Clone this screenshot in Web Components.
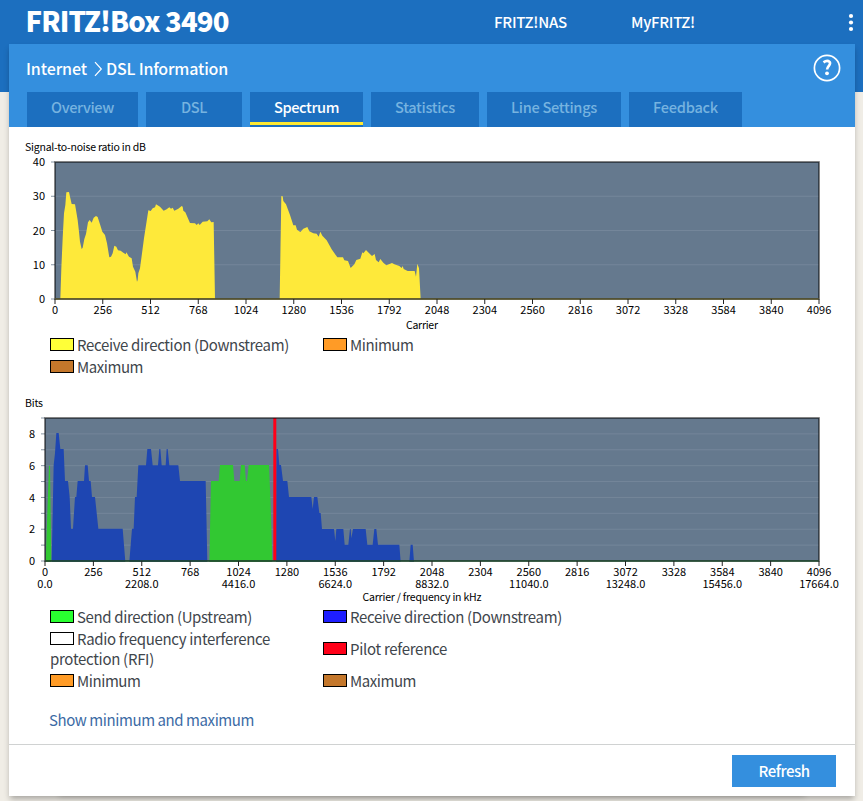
<!DOCTYPE html>
<html lang="en">
<head>
<meta charset="utf-8">
<title>FRITZ!Box 3490</title>
<style>
html,body{margin:0;height:100%;overflow:hidden}
body{font-family:"Noto Sans CJK SC","Noto Sans",sans-serif;color:#3f464c;background:linear-gradient(#1c6fbf 92px,#f0ede6 92px)}
</style>
</head>
<body>
<fritz-page></fritz-page>
<script>
const define = (name, html, init) => customElements.define(name, class extends HTMLElement {
  constructor() {
    super();
    this.attachShadow({ mode: 'open' }).innerHTML = html;
  }
  connectedCallback() { if (init) init.call(this, this.shadowRoot); }
});

// One line of text, tracked so that it fills the width given in its w attribute.
define('fit-text', `<style>:host{display:inline-block;white-space:nowrap}span{display:inline-block}</style><span><slot></slot></span>`, function (root) {
  const w = +this.getAttribute('w'), span = root.querySelector('span');
  const n = this.textContent.length;
  const natural = span.getBoundingClientRect().width;
  if (w && natural) { span.style.letterSpacing = (w - natural) / n + 'px'; }
});

define('nav-tab', `<style>
:host{display:block;box-sizing:border-box;height:35px;background:#1c6fbf;color:#76b3e0;font-size:14.6px;font-weight:500;line-height:30px;text-align:center}
:host([active]){color:#fff;height:33px;border-bottom:3px solid #fee931;box-shadow:0 2px #1c6fbf}
</style><slot></slot>`);

define('legend-item', `<style>
:host{display:block;font-size:15px;line-height:20px;padding:1px 0}
i{display:inline-block;box-sizing:border-box;width:24px;height:13px;border:1px solid #000;background:var(--swatch);margin-right:3px;vertical-align:0}
</style><i></i><slot></slot>`);

define('legend-grid', `<style>:host{display:grid;grid-template-columns:273px 300px;align-items:center;padding-left:41px}</style><slot></slot>`);

const line = (x1, y1, x2, y2, c, w = 1) => `<line x1="${x1}" y1="${y1}" x2="${x2}" y2="${y2}" stroke="${c}" stroke-width="${w}"/>`;
const text = (x, y, s, w, a = 'middle', c = '') => `<text class="${c}" x="${x}" y="${y}" text-anchor="${a}"${w ? ` textLength="${w}"` : ''}>${s}</text>`;
const area = (ox, oy, c, pts) => `<polygon transform="translate(${ox} ${oy}) scale(.33333)" fill="${c}" points="${pts}"/>`;

function plot(o) {
  let s = `<rect x="${o.x}" y="${o.y}" width="${819 - o.x}" height="${o.b - o.y}" fill="#65798e"/>`;
  const rows = o.rows;
  for (let i = 0; i <= rows; i++) {
    const y = o.b - (o.b - o.y) * i / rows;
    if (i && i < rows) s += line(o.x, y, 819, y, '#74869a');
    s += line(o.x - 4, y, o.x, y, '#8795a3');
    if (o.label(i) !== null) s += text(o.x - 10, y + 4.2, o.label(i), 0, 'end');
  }
  s += o.areas;
  s += `<rect x="${o.x}" y="${o.y}" width="${819 - o.x}" height="${o.b - o.y}" fill="none" stroke="#000" stroke-opacity=".6" stroke-width="1.6"/>`;
  s += line(o.x, o.b, 819, o.b, o.base, 1.6);
  for (let i = 0; i <= 16; i++) {
    const x = o.x + (819 - o.x) * i / 16;
    s += line(x, o.b, x, o.b + 5, '#222');
    s += text(x, o.b + 15, i * 256, [6, 18.5, 18.5, 18.5][i] || 24.5);
    if (o.freq && i % 2 === 0) s += text(x, o.b + 27, (i * 1104).toFixed(1));
  }
  return s;
}
const svgStyle = `<style>:host{display:block}svg{display:block}text{font-size:11px;fill:#000}.t{font-size:10.5px}</style>`;

define('snr-chart', svgStyle + `<svg width="846" height="196" viewBox="9 137 846 196">` +
  text(25, 151, 'Signal-to-noise ratio in dB', 121, 'start', 't') +
  plot({ x: 55, y: 162, b: 299, rows: 4, label: i => i * 10, base: '#5d5a30',
    areas: area(0, 135, '#fee93a', '181,492 184,400 188,310 192,235 196,210 199,172 207,171 210,185 215,207 225,208 228,225 233,255 237,290 240,320 245,342 248,338 253,312 258,297 264,262 269,255 275,263 281,248 288,243 293,246 300,268 307,290 315,300 321,325 328,367 333,365 338,355 343,332 349,335 354,346 362,347 370,353 377,358 379,352 387,365 395,370 399,395 406,410 411,440 413,435 415,415 420,400 432,310 445,226 452,228 458,220 465,217 468,208 480,215 491,227 500,223 508,217 513,221 518,218 523,227 535,221 545,213 548,215 550,227 556,232 570,264 585,265 590,270 595,265 599,270 608,260 622,259 628,253 634,262 641,261 645,492') +
      area(220, 135, '#fee93a', '179,492 184,183 188,184 190,198 198,208 210,240 220,271 227,271 231,284 241,291 250,281 262,276 268,289 280,295 290,296 296,305 301,290 307,302 320,316 335,343 352,367 369,367 373,376 384,378 392,399 403,388 409,375 421,371 427,352 430,355 438,345 446,353 456,363 464,357 468,375 476,382 481,372 490,383 499,391 516,384 523,388 538,393 545,399 548,393 551,402 563,408 584,408 588,425 592,386 597,400 602,492') }) +
  text(422, 329, 'Carrier', 32, 'middle', 't') + `</svg>`);

define('bits-chart', svgStyle + `<svg width="846" height="211" viewBox="9 395 846 211">` +
  text(25, 407, 'Bits', 18, 'start', 't') +
  plot({ x: 45, y: 418, b: 561, rows: 9, label: i => i % 2 ? null : i, base: '#245034', freq: true,
    areas: area(20, 395, '#32c832', '77,500 87,212 90,212 94,500') +
      area(20, 395, '#1e46b2', '95,500 101,211 105,175 109,114 116,114 121,162 131,162 135,258 144,258 149,306 153,401 159,401 165,306 169,306 173,258 192,258 195,211 203,211 207,258 212,258 216,306 225,306 235,401 308,401 316,500 328,500 336,401 341,401 345,306 350,306 355,211 378,211 382,162 393,162 398,211 414,211 418,162 421,162 425,211 437,211 440,162 443,162 448,211 475,211 480,258 557,258 562,500') +
      area(200, 405, '#32c832', '28,470 33,228 56,228 60,180 99,180 103,228 119,228 123,180 134,180 138,228 141,228 146,180 207,180 212,300 217,470') +
      area(200, 405, '#1e46b2', '228,470 229,132 234,132 238,180 243,180 249,228 262,228 267,276 334,276 338,312 342,276 352,276 358,324 362,324 366,372 402,372 406,408 409,372 430,372 434,419 445,419 450,372 452,372 454,400 459,372 497,372 502,419 518,419 523,372 529,372 534,419 598,419 602,470 628,470 632,419 638,419 642,470') +
      line(274.8, 418, 274.8, 561, '#ff0018', 3) }) +
  text(422, 601, 'Carrier / frequency in kHz', 119, 'middle', 't') + `</svg>`);

define('fritz-page', `<style>
:host{display:block}
header{display:grid;grid-template-columns:494px 137px 1fr auto;height:44px;align-items:center;color:#fff;font-size:15px;font-weight:500;line-height:44px;box-sizing:border-box}
h1{margin:0;padding-left:25.5px;font-size:27.5px;font-weight:900;height:44px;line-height:41px}
header svg{display:block;margin-right:6px}
main{display:flex;flex-direction:column;margin:0 8px 0 9px;height:752px;background:#fff;box-shadow:0 4px 6px -1px rgba(0,0,0,.3),0 50px 6px -50px rgba(0,0,0,.2)}
.bar{background:#348fde;height:83px;flex:none;padding:0 14px 0 18px}
.crumb{display:flex;align-items:center;height:48px;color:#fff;font-size:16px;font-weight:500;line-height:48px;margin-left:-1px}
.crumb svg.c{margin:1px 3px 0 7px}
.crumb svg.h{margin-left:auto;margin-top:-1px}
nav{display:flex;gap:8px}
.body{height:617px;padding-top:10px;box-sizing:border-box}
.l1{padding-top:1px;height:62px;box-sizing:border-box;align-content:start}
a{display:block;color:#3c6ba5;font-size:15px;line-height:20px;padding:18px 0 0 40px}
footer{display:flex;justify-content:flex-end;align-items:center;border-top:1px solid #d0d2d2;padding:0 19px 0 0;box-sizing:border-box;height:52px}
button{all:unset;width:104px;height:32px;text-align:center;line-height:32px;background:#348fde;color:#fff;font-size:15px;font-weight:500}
</style>
<header><h1><fit-text w="203">FRITZ!Box 3490</fit-text></h1><fit-text w="73">FRITZ!NAS</fit-text><fit-text w="64">MyFRITZ!</fit-text>
<svg width="10" height="20" viewBox="0 0 10 20" fill="#fff"><circle cx="4" cy="4" r="2.1"/><circle cx="4" cy="10.5" r="2.1"/><circle cx="4" cy="17" r="2.1"/></svg></header>
<main>
<div class="bar">
<div class="crumb"><fit-text w="61">Internet</fit-text><svg class="c" width="9" height="16" viewBox="0 0 9 16"><path d="M1 1.2 7.3 8 1 14.8" fill="none" stroke="#fff" stroke-width="1.2"/></svg><fit-text w="122">DSL Information</fit-text>
<svg class="h" width="28" height="28" viewBox="0 0 28 28"><circle cx="14" cy="14" r="12.6" fill="none" stroke="#fff" stroke-width="1.7"/><path d="M10.5 8.4Q14.2 5.6 16.6 7.9C18.8 10.6 14.1 12.1 14.1 15.5" fill="none" stroke="#fff" stroke-width="2.6"/><circle cx="14" cy="19.3" r="1.9" fill="#fff"/></svg></div>
<nav><nav-tab style="width:111px"><fit-text w="63">Overview</fit-text></nav-tab><nav-tab style="width:96px"><fit-text w="26">DSL</fit-text></nav-tab><nav-tab active style="width:113px"><fit-text w="65">Spectrum</fit-text></nav-tab><nav-tab style="width:108px"><fit-text w="60">Statistics</fit-text></nav-tab><nav-tab style="width:134px"><fit-text w="86">Line Settings</fit-text></nav-tab><nav-tab style="width:113px"><fit-text w="65">Feedback</fit-text></nav-tab></nav>
</div>
<div class="body">
<snr-chart></snr-chart>
<legend-grid class="l1">
<legend-item style="--swatch:#ffff38"><fit-text w="212">Receive direction (Downstream)</fit-text></legend-item>
<legend-item style="--swatch:#ff9b26"><fit-text w="63.5">Minimum</fit-text></legend-item>
<legend-item style="--swatch:#c4772b"><fit-text w="66">Maximum</fit-text></legend-item>
</legend-grid>
<bits-chart></bits-chart>
<legend-grid class="l2">
<legend-item style="--swatch:#29ff30"><fit-text w="175">Send direction (Upstream)</fit-text></legend-item>
<legend-item style="--swatch:#1e1eff"><fit-text w="212">Receive direction (Downstream)</fit-text></legend-item>
<legend-item style="--swatch:#fff"><fit-text w="193">Radio frequency interference</fit-text><br><fit-text w="104">protection (RFI)</fit-text></legend-item>
<legend-item style="--swatch:#ff0018"><fit-text w="97">Pilot reference</fit-text></legend-item>
<legend-item style="--swatch:#ff9b26"><fit-text w="63.5">Minimum</fit-text></legend-item>
<legend-item style="--swatch:#c4772b"><fit-text w="66">Maximum</fit-text></legend-item>
</legend-grid>
<a><fit-text w="205">Show minimum and maximum</fit-text></a>
</div>
<footer><button><fit-text w="51">Refresh</fit-text></button></footer>
</main>`);
</script>
</body>
</html>
